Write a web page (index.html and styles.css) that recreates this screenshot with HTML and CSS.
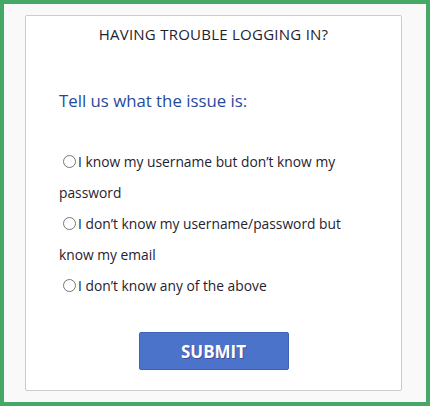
FILE: index.html
```html
<!DOCTYPE html>
<html>
<head>
<meta charset="utf-8">
<link rel="stylesheet" href="styles.css">
</head>
<body>
<div class="frame">
  <div class="card">
    <h1 class="title">HAVING TROUBLE LOGGING IN?</h1>
    <p class="prompt">Tell us what the issue is:</p>
    <form class="form">
      <div class="options">
        <label class="option"><input type="radio" name="issue" class="radio">I know my username but don’t know my password</label>
        <label class="option"><input type="radio" name="issue" class="radio">I don’t know my username/password but know my email</label>
        <label class="option"><input type="radio" name="issue" class="radio">I don’t know any of the above</label>
      </div>
      <div class="actions"><button type="button" class="submit">SUBMIT</button></div>
    </form>
  </div>
</div>
</body>
</html>
```
FILE: styles.css
```css
* { box-sizing: border-box; }
html, body { margin: 0; padding: 0; }
body { font-family: "Open Sans", "Lato", sans-serif; }
.frame {
  width: 430px;
  height: 406px;
  border: 4px solid #46a866;
  background: #f9f9f9;
  padding: 11px 24px 11px 21px;
}
.card {
  height: 376px;
  background: #fff;
  border: 1px solid #cccccc;
  border-radius: 2px;
  padding-top: 9px;
}
.title {
  margin: 0;
  text-align: center;
  font-size: 15px;
  font-weight: 400;
  letter-spacing: 0.25px;
  color: #1f2330;
  line-height: 18px;
}
.prompt {
  margin: 47px 0 0 0;
  padding-left: 33px;
  font-size: 16.8px;
  line-height: 21px;
  color: #1f4a9e;
}
.options {
  margin-top: 35px;
  padding: 0 30px 0 33px;
  display: flex;
  flex-direction: column;
}
.option {
  font-size: 13.8px;
  line-height: 31px;
  color: #1f2330;
}
.radio {
  margin: 0 2px 0 4px;
  width: 13px;
  height: 13px;
  vertical-align: -1px;
}
.actions {
  display: flex;
  justify-content: center;
  margin-top: 31px;
}
.submit {
  width: 150px;
  height: 38px;
  background: #4b73c9;
  border: 1px solid #3e62b5;
  border-radius: 2px;
  color: #fff;
  font-family: "Open Sans", sans-serif;
  font-weight: 700;
  font-size: 17px;
  text-shadow: 1px 1px 0 rgba(80, 40, 120, 0.6);
}
```
